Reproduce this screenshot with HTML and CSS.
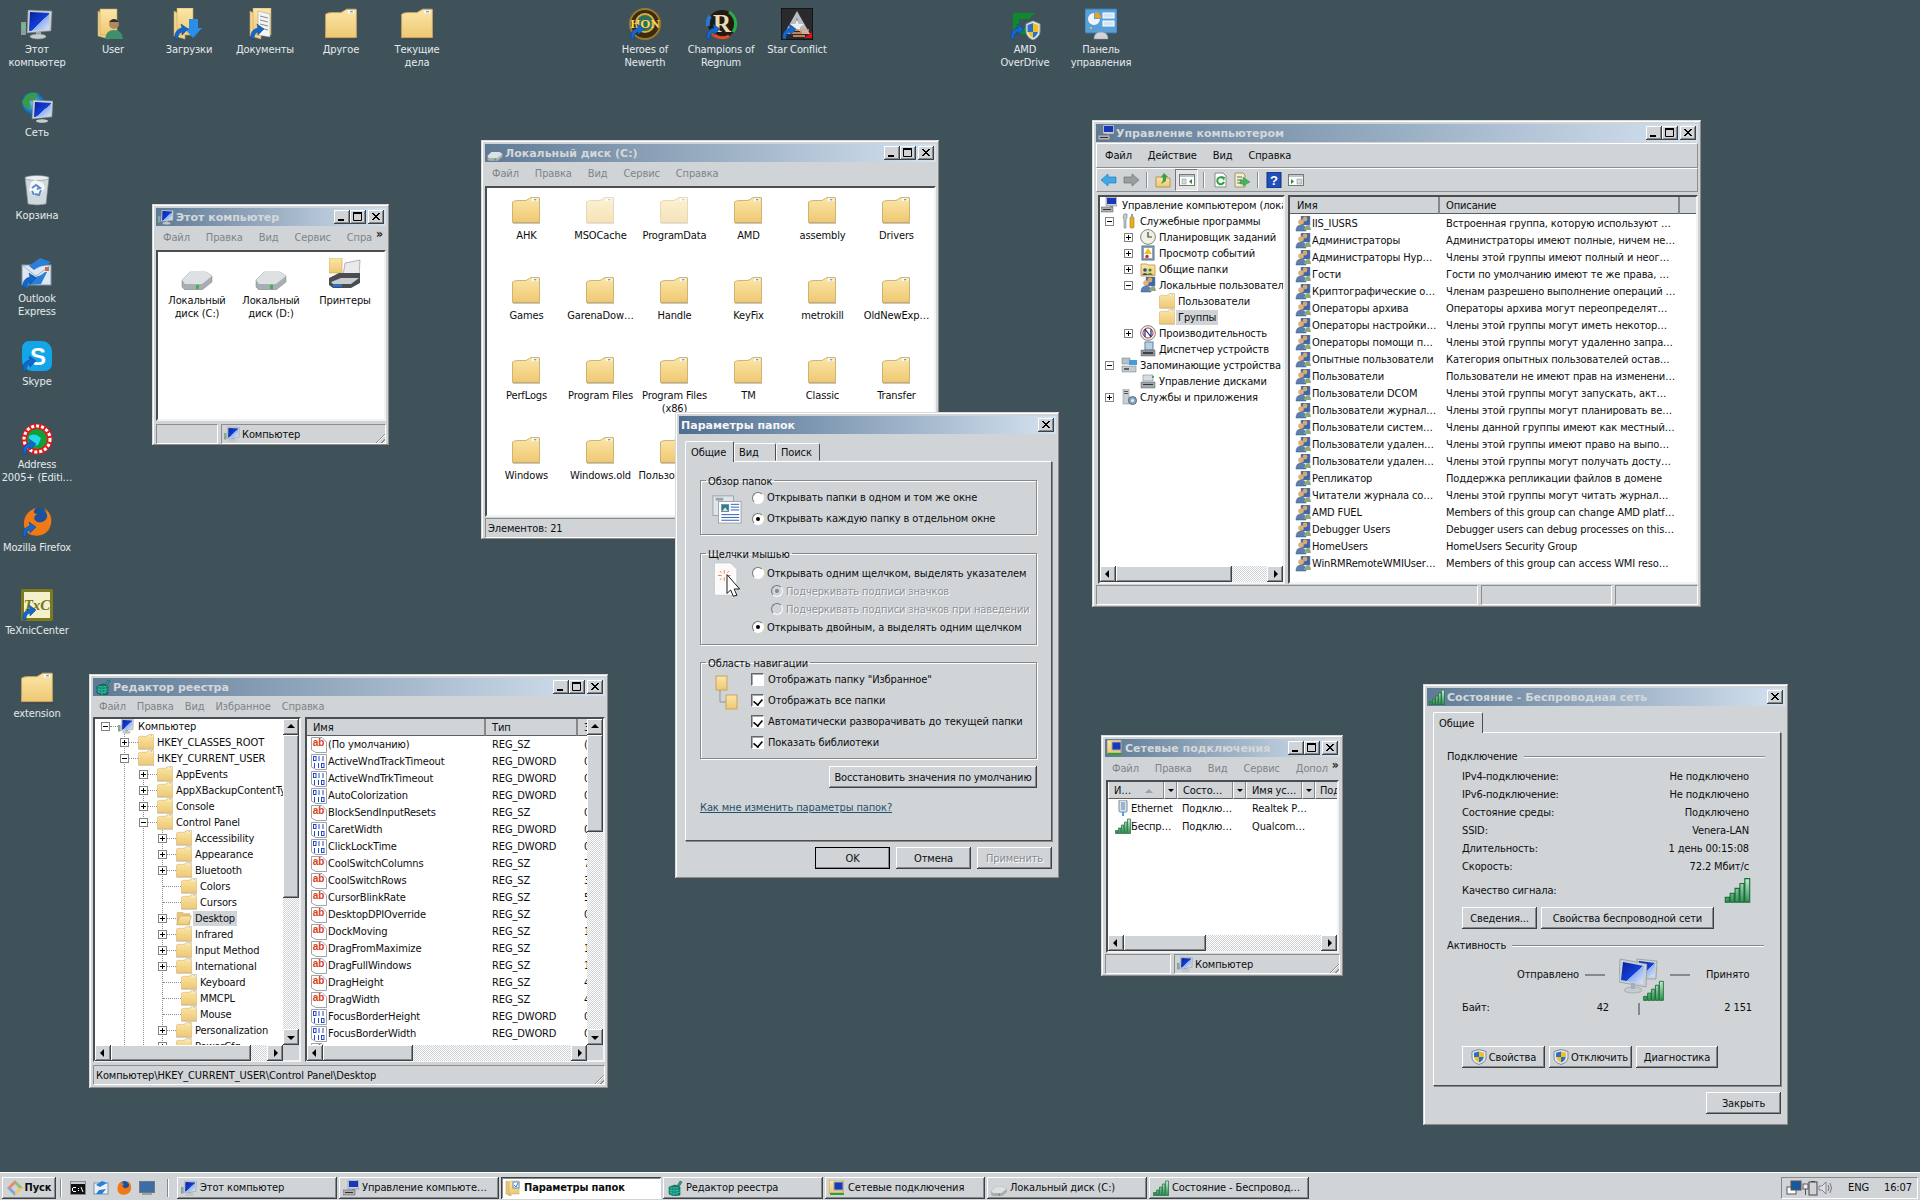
FILE: index.html
```html
<!DOCTYPE html>
<html lang="ru">
<head>
<meta charset="utf-8">
<title>Рабочий стол</title>
<link rel="stylesheet" href="styles.css">
</head>
<body>
<svg class="sprite" xmlns="http://www.w3.org/2000/svg">
<defs>
<linearGradient id="fg" x1="0" y1="0" x2="0" y2="1"><stop offset="0" stop-color="#fbe6a8"/><stop offset="1" stop-color="#eec873"/></linearGradient>
<linearGradient id="scr" x1="0" y1="0" x2="1" y2="1"><stop offset="0" stop-color="#06209c"/><stop offset=".55" stop-color="#1440d8"/><stop offset=".56" stop-color="#8fb0f0"/><stop offset="1" stop-color="#dfe9fb"/></linearGradient>
<linearGradient id="bar" x1="0" y1="0" x2="0" y2="1"><stop offset="0" stop-color="#c6ecd0"/><stop offset="1" stop-color="#2c9150"/></linearGradient>
<radialGradient id="glb"><stop offset="0" stop-color="#6cc6f0"/><stop offset="1" stop-color="#10609c"/></radialGradient>
</defs>
<symbol id="arrow" viewBox="0 0 32 32"><path d="M2 31 C1 25 4 21 9 20 L8 16 L15 21 L9 27 L9 24 C6 25 5 27 5 31 Z" fill="#1266cc" stroke="#0a3f8a" stroke-width=".5"/></symbol>
<symbol id="folder" viewBox="0 0 28 27"><rect x="1" y="25" width="27" height="2" fill="#000" opacity=".22"/><path d="M.5 5 Q2 3.5 6 3.5 H14 L19 .5 H27 Q27.5 .5 27.5 1 V25.5 H.5 Z" fill="url(#fg)" stroke="#c7a35d" stroke-width=".8"/><rect x="20" y="1.5" width="5.5" height="2.6" fill="#fff"/><rect x="22" y="2" width="2.4" height="1.4" fill="#6a9ed8"/></symbol>
<symbol id="fopen" viewBox="0 0 28 27"><path d="M2 4 H12 L14 6 H24 V25 H2 Z" fill="#e8c878" stroke="#c7a35d"/><path d="M7 10 H27 L22 25.5 H1 Z" fill="url(#fg)" stroke="#c7a35d"/></symbol>
<symbol id="comp" viewBox="0 0 32 32"><rect x="0" y="14" width="5" height="13" fill="#8f9ba0"/><rect x="1" y="16" width="3" height="6" fill="#6fbf7f"/><polygon points="7,2 31,3 30,23 6,25" fill="#c9d0d4" stroke="#6f7a80" stroke-width=".6"/><polygon points="9,4 28,5 28,21 8,23" fill="url(#scr)"/><rect x="15" y="24" width="5" height="3" fill="#a5acb0"/><ellipse cx="17" cy="28.5" rx="8" ry="2.5" fill="#c6cbce" stroke="#8a9094" stroke-width=".5"/></symbol>
<symbol id="net" viewBox="0 0 32 32"><circle cx="12" cy="12" r="11.5" fill="url(#glb)"/><path d="M5 4 Q12 0 17 3 L14 9 L8 10 L10 16 L4 17 L1 11 Z" fill="#3a9a48"/><path d="M13 18 L18 21 L16 24 L12 22 Z" fill="#3a9a48"/><polygon points="12,9 32,10 31,26 11,28" fill="#c9d0d4" stroke="#6f7a80" stroke-width=".5"/><polygon points="14,11 30,12 30,24 13,26" fill="url(#scr)"/><ellipse cx="21" cy="30" rx="6" ry="1.8" fill="#c6cbce"/></symbol>
<symbol id="bin" viewBox="0 0 32 32"><path d="M4 3 H28 L25 30 Q16 32 7 30 Z" fill="#cfd8dc" stroke="#7f8b92" stroke-width=".6"/><ellipse cx="16" cy="4" rx="12" ry="2.5" fill="#e9eef0" stroke="#7f8b92" stroke-width=".6"/><path d="M10 8 L14 6 L22 9 L24 14 L20 20 L12 22 L8 16 Z" fill="#f4f7f8"/><path d="M11 14 L15 11 L19 14 L16 15 M20 16 L18 21 L14 20 M11 17 L13 21" stroke="#5f88c8" stroke-width="2" fill="none"/></symbol>
<symbol id="oe" viewBox="0 0 32 32"><rect x="1" y="8" width="29" height="20" fill="#dfe8f2" stroke="#7d93ad"/><path d="M1 8 L15 19 L30 8" fill="none" stroke="#9fb3c8"/><rect x="24" y="10" width="4" height="4" fill="#c86b4b"/><path d="M19 1 L8 9 L13 13 Q18 9 26 8 L30 5 Z" fill="#2b7fd8"/><path d="M26 15 L20 27 L8 28 L5 31 Q3 24 12 18 L14 20 Q20 19 24 15 Z" fill="#2b7fd8"/></symbol>
<symbol id="skype" viewBox="0 0 32 32"><rect x="1" y="1" width="30" height="30" rx="10" fill="#12a5e8"/><circle cx="8" cy="8" r="7" fill="#12a5e8"/><circle cx="24" cy="24" r="7" fill="#12a5e8"/></symbol>
<symbol id="addr" viewBox="0 0 32 32"><circle cx="16" cy="16" r="15.5" fill="#e01818"/><circle cx="16" cy="16" r="10" fill="#0fa03c"/><path d="M8 13 Q14 9 20 15 L17 22 Q10 24 8 18 Z" fill="#25d8e8"/><circle cx="16" cy="16" r="13" fill="none" stroke="#fff" stroke-width="3" stroke-dasharray="3 2"/></symbol>
<symbol id="ff" viewBox="0 0 32 32"><circle cx="17" cy="15" r="13" fill="#1c4f9c"/><path d="M3 20 C2 10 8 4 15 2 C11 6 13 8 17 8 C13 9 12 13 15 15 C18 18 25 16 26 11 C27 7 24 3 23 2 C30 6 32 14 29 21 C26 29 17 31 11 29 C6 28 4 24 3 20 Z" fill="#ef7a15"/><path d="M22 4 C28 8 30 14 28 20 C30 12 27 6 22 4Z" fill="#f6c534"/></symbol>
<symbol id="txc" viewBox="0 0 32 32"><rect x="0" y="0" width="32" height="32" rx="2" fill="#7c7a1e"/><rect x="3" y="3" width="26" height="26" fill="#f3f0cc"/></symbol>
<symbol id="user" viewBox="0 0 32 32"><path d="M1 3 L12 9 V31 L1 28 Z" fill="#f1d792" stroke="#c7a35d" stroke-width=".6"/><path d="M3 1 H20 V27 H3 Z" fill="url(#fg)" stroke="#c7a35d" stroke-width=".6"/><circle cx="17" cy="16" r="5" fill="#b08860"/><path d="M12 14 Q17 8 22 14 Z" fill="#2f2f2f"/><path d="M8 31 Q9 22 17 22 Q25 22 26 31 Z" fill="#3f8f6a"/></symbol>
<symbol id="dl" viewBox="0 0 32 32"><path d="M1 3 L12 9 V31 L1 28 Z" fill="#f1d792" stroke="#c7a35d" stroke-width=".6"/><path d="M4 0 H20 V27 H4 Z" fill="url(#fg)" stroke="#c7a35d" stroke-width=".6"/><path d="M16 11 H25 V20 H29 L20 30 L11 20 H16 Z" fill="#2a8ee6"/><use href="#arrow" width="32" height="32"/></symbol>
<symbol id="docs" viewBox="0 0 32 32"><path d="M1 3 L12 9 V31 L1 28 Z" fill="#f1d792" stroke="#c7a35d" stroke-width=".6"/><path d="M4 0 H22 V27 H4 Z" fill="url(#fg)" stroke="#c7a35d" stroke-width=".6"/><path d="M9 3 L21 6 V29 L9 27 Z" fill="#f4f4f4" stroke="#999" stroke-width=".5"/><path d="M11 8 L19 10 M11 12 L19 14 M11 16 L19 18 M11 20 L19 22" stroke="#888"/><use href="#arrow" width="32" height="32"/></symbol>
<symbol id="hon" viewBox="0 0 32 32"><circle cx="16" cy="16" r="15" fill="#3d2a10" stroke="#9c7a2c" stroke-width="2"/><circle cx="16" cy="15" r="9" fill="#2f6e58" stroke="#d8b040" stroke-width="2"/></symbol>
<symbol id="reg" viewBox="0 0 32 32"><circle cx="17" cy="16" r="14" fill="#241a12"/><path d="M24 4 A14 14 0 0 1 28 24" stroke="#28b048" stroke-width="3" fill="none"/><path d="M6 24 A14 14 0 0 0 24 28" stroke="#e84a20" stroke-width="3" fill="none"/><path d="M5 8 A14 14 0 0 0 3 18" stroke="#2878d8" stroke-width="4" fill="none"/></symbol>
<symbol id="sc" viewBox="0 0 32 32"><rect x="0" y="0" width="32" height="32" fill="#2a2a2c" stroke="#000"/><path d="M16 3 L29 26 H3 Z" fill="#b8bcc4"/><path d="M16 10 L21 26 H11 Z" fill="#2a2a2c"/><path d="M16 11 L18 16 L23 16 L19 19 L20 24 L16 21 L12 24 L13 19 L9 16 L14 16 Z" fill="#eee"/><path d="M8 22 H28 M10 25 H26 M12 28 H24" stroke="#e8a070" stroke-width="1.5"/><path d="M23 30 L31 24 V30 Z" fill="#e01010"/></symbol>
<symbol id="amd" viewBox="0 0 32 32"><path d="M4 5 H26 L20 11 H10 V18 L4 23 Z" fill="#0e8a2c"/><path d="M22 12 V26 H10 L22 12" fill="#0e8a2c"/><path d="M24 13 L31 16 V23 Q31 29 24 32 Q17 29 17 23 V16 Z" fill="#e8edf0" stroke="#8a9aa8"/><path d="M24 15 V24 H18.5 V17 Z" fill="#2a70c8"/><path d="M24 15 L29.5 17 V24 H24 Z" fill="#f0c020"/><path d="M19 24 H24 V30 Q20 28 19 24Z" fill="#f0c020"/><path d="M24 24 H29 Q28 28 24 30Z" fill="#2a70c8"/></symbol>
<symbol id="cp" viewBox="0 0 32 32"><rect x="0" y="1" width="32" height="24" rx="1" fill="#5aa0d8" stroke="#3a7ab0"/><path d="M9 5 A6 6 0 1 0 15 11 H9 Z" fill="#fff" opacity=".9"/><path d="M10 4 A6 6 0 0 1 16 10 H10 Z" fill="#f0a020"/><rect x="18" y="5" width="11" height="5" fill="#cfe6f8" stroke="#fff"/><rect x="18" y="13" width="11" height="5" fill="#cfe6f8" stroke="#fff"/><circle cx="6" cy="20" r="1" fill="#f8d040"/><path d="M9 31 Q9 24 16 24 Q23 24 23 31 Z" fill="#d0d4d8" stroke="#999" stroke-width=".5"/></symbol>
<symbol id="drive" viewBox="0 0 32 32"><path d="M1 22 L9 14 H25 L31 18 V24 L21 32 H4 L1 29 Z" fill="#a8aeb2" stroke="#7b8186" stroke-width=".5"/><path d="M1 22 L9 14 H25 L31 18 L21 26 H4 Z" fill="#dde1e3"/><rect x="15" y="27" width="3" height="4" fill="#39b54a"/></symbol>
<symbol id="printer" viewBox="0 0 32 32"><rect x="0" y="0" width="13" height="15" fill="url(#fg)" stroke="#c7a35d" stroke-width=".6"/><path d="M16 5 L31 2 L30 18 L14 18 Z" fill="#e8eaec" stroke="#888" stroke-width=".6"/><path d="M0 20 L10 15 H31 V25 L22 30 H4 L0 27 Z" fill="#4a4d50"/><path d="M2 24 L12 20 H30 L22 26 H4 Z" fill="#c8ccd0"/><rect x="4" y="26" width="9" height="3" fill="#2a70c8"/></symbol>
<symbol id="c-min" viewBox="0 0 16 14"><rect x="4" y="9" width="6" height="2" fill="#000"/></symbol>
<symbol id="c-max" viewBox="0 0 16 14"><path d="M3.5 2.5 H11.5 V10.5 H3.5 Z M3 3 H12" fill="none" stroke="#000"/><rect x="3" y="2" width="9" height="2" fill="#000"/></symbol>
<symbol id="c-x" viewBox="0 0 16 14"><path d="M4 3 L11 10 M11 3 L4 10 M5 3 L12 10 M12 3 L5 10" stroke="#000" fill="none"/></symbol>
<symbol id="grp" viewBox="0 0 16 16"><rect x="6" y="0" width="9" height="9" fill="#3f66a8" stroke="#6a86b8" stroke-width=".5"/><circle cx="10" cy="3" r="2.4" fill="#d8a868"/><circle cx="6" cy="6" r="2.8" fill="#e0b078"/><path d="M1 15 Q1 9 6 9 Q11 9 11 15 Z" fill="#5c7fae" stroke="#39557c" stroke-width=".5"/><path d="M9 14 Q10 9 14 9 Q16 11 16 14 Z" fill="#8ca87a"/></symbol>
<symbol id="tools" viewBox="0 0 16 16"><path d="M3 1 L6 1 L6 5 L5 6 V15 H3 V6 L2 5 Z" fill="#c8ccd0" stroke="#6f777c" stroke-width=".6"/><rect x="9" y="4" width="4" height="11" rx="1" fill="#e8b020" stroke="#a07a10" stroke-width=".6"/><rect x="10" y="1" width="2" height="4" fill="#9aa0a4"/></symbol>
<symbol id="clock" viewBox="0 0 16 16"><circle cx="8" cy="8" r="7.4" fill="#f2f0e2" stroke="#7f858a"/><path d="M8 3 V8 H12" stroke="#344" stroke-width="1.2" fill="none"/></symbol>
<symbol id="evt" viewBox="0 0 16 16"><rect x="2" y="1" width="12" height="14" fill="#8da6c4" stroke="#54708f"/><rect x="4" y="3" width="8" height="10" fill="#fff"/><path d="M8 3 L12 9 H4 Z" fill="#f0c020"/><circle cx="7" cy="11.5" r="1.8" fill="#d83020"/></symbol>
<symbol id="share" viewBox="0 0 16 16"><path d="M1 3 H7 L8 4 H15 V15 H1 Z" fill="url(#fg)" stroke="#c7a35d"/><circle cx="5" cy="9" r="1.8" fill="#2a4a90"/><path d="M2 14 Q5 10 8 14 Z" fill="#2a4a90"/><circle cx="10" cy="9" r="1.6" fill="#3a8040"/><path d="M7 14 Q10 10 13 14 Z" fill="#3a8040"/></symbol>
<symbol id="perf" viewBox="0 0 16 16"><circle cx="8" cy="8" r="7.4" fill="#eef0f2" stroke="#7f858a"/><circle cx="8" cy="8" r="5" fill="#fff" stroke="#c83030"/><path d="M5 4 L11 12 M5 12 V4 M11 4 V12" stroke="#1a2a70" stroke-width="1.2" fill="none"/></symbol>
<symbol id="dev" viewBox="0 0 16 16"><rect x="5" y="1" width="8" height="8" fill="#b8d0e8" stroke="#6a7f95"/><path d="M1 9 H15 V15 H1 Z" fill="#8f969b" stroke="#5a6066" stroke-width=".5"/><rect x="3" y="11" width="10" height="2" fill="#3a4046"/></symbol>
<symbol id="stor" viewBox="0 0 16 16"><path d="M1 1 H9 V7 H1 Z" fill="#b8c0c6" stroke="#6f777c" stroke-width=".5"/><path d="M1 9 H15 V15 H1 Z" fill="#c8ccd0" stroke="#6f777c" stroke-width=".5"/><rect x="8" y="3" width="8" height="5" fill="#3f9fd8"/><rect x="3" y="11" width="5" height="2" fill="#5a6066"/></symbol>
<symbol id="dmgmt" viewBox="0 0 16 16"><path d="M1 9 H15 V15 H1 Z" fill="#a0a6aa" stroke="#5a6066" stroke-width=".5"/><rect x="3" y="2" width="10" height="6" fill="#d8dcdf" stroke="#6f777c" stroke-width=".5"/><rect x="3" y="11" width="10" height="1" fill="#333"/><rect x="12" y="3" width="2" height="2" fill="#39b54a"/></symbol>
<symbol id="svc" viewBox="0 0 16 16"><rect x="2" y="0" width="6" height="15" fill="#c8d0d6" stroke="#7f878c" stroke-width=".5"/><rect x="3" y="2" width="4" height="1" fill="#555"/><rect x="3" y="4" width="4" height="1" fill="#555"/><circle cx="11.5" cy="11.5" r="4" fill="#8aa8c0" stroke="#4a6680"/><circle cx="11.5" cy="11.5" r="1.5" fill="#eee"/></symbol>
<symbol id="mgmt" viewBox="0 0 16 16"><rect x="5" y="0" width="11" height="9" fill="#c8d0d6" stroke="#6f777c" stroke-width=".5"/><rect x="6" y="1" width="9" height="6" fill="#1a36b8"/><rect x="9" y="9" width="3" height="2" fill="#999"/><path d="M0 10 H12 V15 H0 Z" fill="#aab0b4" stroke="#555" stroke-width=".5"/><rect x="2" y="12" width="8" height="1" fill="#333"/></symbol>
<symbol id="t-back" viewBox="0 0 16 16"><path d="M0 8 L7 2 V5 H15 V11 H7 V14 Z" fill="#3fa8e8" stroke="#1a70b0" stroke-width=".6"/></symbol>
<symbol id="t-fwd" viewBox="0 0 16 16"><path d="M16 8 L9 2 V5 H1 V11 H9 V14 Z" fill="#9a9ea0" stroke="#666" stroke-width=".6"/></symbol>
<symbol id="t-up" viewBox="0 0 16 16"><path d="M1 5 H6 L7 6 H15 V15 H1 Z" fill="url(#fg)" stroke="#b8964c"/><path d="M9 1 L13 5 H11 V9 L6 12 L8 8 V5 H6 Z" fill="#3aa048"/></symbol>
<symbol id="t-pane" viewBox="0 0 16 16"><rect x=".5" y="2.5" width="15" height="11" fill="#fff" stroke="#777"/><rect x="1" y="3" width="14" height="2" fill="#b8c4d0"/><rect x="3" y="7" width="4" height="5" fill="#cdd" stroke="#888" stroke-width=".5"/><path d="M13 7 L10 9.5 L13 12 Z" fill="#2c8a40"/></symbol>
<symbol id="t-ref" viewBox="0 0 16 16"><path d="M3 1 H11 L14 4 V15 H3 Z" fill="#fff" stroke="#888"/><path d="M11 6 A3.5 3.5 0 1 0 12 10" stroke="#2ca040" stroke-width="2" fill="none"/><path d="M9 4 L13 5 L12 9 Z" fill="#2ca040"/></symbol>
<symbol id="t-exp" viewBox="0 0 16 16"><path d="M1 1 H9 L11 3 V15 H1 Z" fill="#f6efcf" stroke="#a09468"/><path d="M3 5 H8 M3 8 H8 M3 11 H8" stroke="#666"/><path d="M9 5 L16 10 L9 14 V12 H6 V8 H9 Z" fill="#46b25a" stroke="#2c8a40" stroke-width=".4"/></symbol>
<symbol id="t-help" viewBox="0 0 16 16"><rect x="1" y="0" width="14" height="16" fill="#1f50b8" stroke="#0f3080"/></symbol>
<symbol id="t-pane2" viewBox="0 0 16 16"><rect x=".5" y="2.5" width="15" height="11" fill="#fff" stroke="#777"/><rect x="1" y="3" width="14" height="2" fill="#b8c4d0"/><path d="M3 7 L6 9.5 L3 12 Z" fill="#2c8a40"/><rect x="9" y="7" width="5" height="5" fill="#cdd" stroke="#888" stroke-width=".5"/></symbol>
<symbol id="regedit" viewBox="0 0 16 16"><path d="M2 7 L8 5 L13 7 V15 L7 16 L2 14 Z" fill="#15806c" stroke="#063028" stroke-width=".5"/><path d="M7 8 V16 M2 7 L7 8 L13 7 M2 10 L7 11 L13 10 M2 12 L7 14 L13 12 M4 7.5 V14.5 M10 7.5 V15" stroke="#39e0c8" stroke-width=".5" fill="none"/><path d="M10 6 L13 1 L15 2 L12 7 Z" fill="#2aa088" stroke="#063028" stroke-width=".4"/></symbol>
<symbol id="val-page" viewBox="0 0 16 16"><path d="M.5 .5 H11 L15.5 5 V15.5 H5 L.5 13 Z" fill="#fff" stroke="#9ea4a8"/></symbol>
<symbol id="val-bin" viewBox="0 0 16 16"><path d="M.5 .5 H15.5 V15.5 H5 L.5 13 Z" fill="#fff" stroke="#9ea4a8"/><g fill="none" stroke="#2048c8"><rect x="2.5" y="2.5" width="2.5" height="4"/><path d="M8 2 V7 M12 2 V7"/><path d="M3.5 9 V14 M7.5 9 V14"/><rect x="10.5" y="9.5" width="2.5" height="4"/></g></symbol>
<symbol id="wifi" viewBox="0 0 16 16"><path d="M.5 12.5 H3 V15.5 H.5 Z M3.5 10 H6 V15.5 H3.5 Z M6.5 7 H9 V15.5 H6.5 Z M9.5 4 H12 V15.5 H9.5 Z M12.5 1 H15.5 V15.5 H12.5 Z" fill="url(#bar)" stroke="#1d6e3c" stroke-width=".7"/></symbol>
<symbol id="eth" viewBox="0 0 16 16"><rect x="4" y="0" width="8" height="12" rx="1" fill="#dbe3ea" stroke="#7a8c9e"/><rect x="6" y="2" width="4" height="8" fill="#9bb4ce"/><rect x="7" y="12" width="2" height="4" fill="#4aa0e8"/></symbol>
<symbol id="shield" viewBox="0 0 16 16"><path d="M8 .5 L15 2.5 V9 Q15 13 8 15.5 Q1 13 1 9 V2.5 Z" fill="#e6eaee" stroke="#7c8a98"/><path d="M8 2.5 V8 H3 V3.8 Z" fill="#2a70c8"/><path d="M8 2.5 L13 3.8 V8 H8 Z" fill="#f0c020"/><path d="M3.2 8 H8 V13.5 Q4 12 3.2 8Z" fill="#f0c020"/><path d="M8 8 H12.8 Q12 12 8 13.5Z" fill="#2a70c8"/></symbol>
<symbol id="fo-view" viewBox="0 0 32 32"><rect x="1" y="2" width="22" height="21" fill="#dfe5ea" stroke="#9aa2a8"/><rect x="4" y="4" width="8" height="3" fill="#96a4b2"/><rect x="7" y="8" width="24" height="23" fill="#fff" stroke="#9aa2a8"/><rect x="10" y="11" width="8" height="8" fill="#1f7fa0" stroke="#888" stroke-width=".5"/><path d="M11 18 L14 14 L17 18 Z" fill="#e6e1b0"/><path d="M20 11 H29 M20 14 H29 M20 17 H29 M10 22 H29 M10 25 H29 M10 28 H29" stroke="#2855b8"/></symbol>
<symbol id="fo-click" viewBox="0 0 32 40"><path d="M2 1 H20 L27 8 V37 H2 Z" fill="#fbfbfb" stroke="#c4c8cc"/><path d="M13 9 V13 M13 17 V21 M6 15 H10 M16 15 H20 M8 10 L10 12 M18 10 L16 12 M8 20 L10 18" stroke="#ee7a30"/><path d="M16 14 L30 30 H24 L27 37 L23 38 L20 31 L16 35 Z" fill="#fff" stroke="#000"/></symbol>
<symbol id="fo-tree" viewBox="0 0 26 40"><rect x="2" y="2" width="11" height="14" fill="url(#fg)" stroke="#c7a35d"/><rect x="12" y="21" width="11" height="14" fill="url(#fg)" stroke="#c7a35d"/><path d="M6 16 V28 H12" stroke="#8e9498" fill="none"/></symbol>
<symbol id="fo-task" viewBox="0 0 16 16"><path d="M1 1 L6 3 V16 L1 14 Z" fill="#e8c878" stroke="#b8964c" stroke-width=".5"/><rect x="4" y="1" width="10" height="13" fill="url(#fg)" stroke="#c7a35d" stroke-width=".5"/><rect x="8" y="2" width="6" height="6" fill="#fff" stroke="#5a8ac0"/><path d="M9 5 L11 7 L13 3" stroke="#2a70c8" fill="none"/></symbol>
<symbol id="netc" viewBox="0 0 16 16"><rect x="0" y="0" width="14" height="13" fill="url(#fg)" stroke="#c7a35d"/><rect x="5" y="2" width="9" height="8" fill="#1a3ab8" stroke="#9ab"/><rect x="1" y="13" width="14" height="2" fill="#2ca040"/></symbol>
<symbol id="netcomp" viewBox="0 0 46 44"><polygon points="18,2 38,4 37,22 18,22" fill="#c9d0d4" stroke="#6f7a80" stroke-width=".5"/><polygon points="20,4 36,6 35,20 20,20" fill="url(#scr)"/><polygon points="1,2 28,7 27,30 0,25" fill="#c9d0d4" stroke="#6f7a80" stroke-width=".5"/><polygon points="4,5 25,9 24,27 2,23" fill="url(#scr)"/><ellipse cx="14" cy="33" rx="9" ry="3" fill="#c6cbce" stroke="#8a9094" stroke-width=".5"/><rect x="12" y="26" width="4" height="6" fill="#aab"/><use href="#wifi" x="24" y="23" width="21" height="21"/></symbol>
<symbol id="start" viewBox="0 0 16 16"><path d="M8 0 L16 8 L12 8 L8 4 Z" fill="#8fbf7a"/><path d="M8 0 L0 8 L4 8 L8 4 Z" fill="#e88a70"/><path d="M0 8 L8 16 L8 12 L4 8 Z" fill="#7fa8d8"/><path d="M16 8 L8 16 L8 12 L12 8 Z" fill="#f0c860"/></symbol>
<symbol id="cmd" viewBox="0 0 16 16"><rect x=".5" y="1.5" width="15" height="13" fill="#111" stroke="#888"/><rect x="1" y="2" width="14" height="2" fill="#c8ccd0"/><path d="M3 7 H6 V8 H3 Z M3 11 H6 V12 H3 Z M2 8 H3 V11 H2 Z M8 8 H9 V9 H8 Z M8 10 H9 V11 H8 Z" fill="#fff"/><path d="M11 7 L13 12" stroke="#fff"/></symbol>
<symbol id="oe16" viewBox="0 0 16 16"><rect x="1" y="3" width="14" height="11" fill="#eef2f6" stroke="#7d93ad"/><path d="M9 1 L3 5 L7 7 L14 3 Z M13 9 L9 14 L3 14 L6 10 Z" fill="#2b7fd8"/></symbol>
<symbol id="showd" viewBox="0 0 16 16"><rect x=".5" y="1.5" width="15" height="11" fill="#3a6ea5" stroke="#6f7a80"/><rect x="3" y="13" width="10" height="2" fill="#9aa0a4"/></symbol>
<symbol id="tr-net" viewBox="0 0 16 16"><rect x="1" y="7" width="9" height="7" fill="#fff" stroke="#555"/><rect x="5" y="1" width="10" height="9" fill="#17599f" stroke="#555"/></symbol>
<symbol id="tr-pow" viewBox="0 0 16 16"><rect x="7" y="2" width="8" height="13" fill="none" stroke="#444"/><rect x="9" y="1" width="4" height="1" fill="#444"/><rect x="1" y="4" width="5" height="5" fill="#eee" stroke="#555"/><rect x="3" y="9" width="1" height="6" fill="#555"/></symbol>
<symbol id="tr-vol" viewBox="0 0 16 16"><path d="M1 6 H4 L8 2 V14 L4 10 H1 Z" fill="#dde" stroke="#666" stroke-width=".7"/><path d="M10 5 Q12 8 10 11 M12 3 Q15 8 12 13" stroke="#777" fill="none"/></symbol>
</svg>

<main class="desktop">
  <div class="dicons">
    <a class="dicon"><svg class="i32"><use href="#comp"/></svg><span>Этот компьютер</span></a>
    <a class="dicon"><svg class="i32"><use href="#user"/></svg><span>User</span></a>
    <a class="dicon"><svg class="i32"><use href="#dl"/></svg><span>Загрузки</span></a>
    <a class="dicon"><svg class="i32"><use href="#docs"/></svg><span>Документы</span></a>
    <a class="dicon"><svg class="i32"><use href="#folder"/></svg><span>Другое</span></a>
    <a class="dicon"><svg class="i32"><use href="#folder"/></svg><span>Текущие дела</span></a>
    <a class="dicon c8"><svg class="i32" viewBox="0 0 32 32"><use href="#hon" width="32" height="32"/><text class="lg lg-hon" x="16" y="20">HON</text><use href="#arrow" width="32" height="32"/></svg><span>Heroes of Newerth</span></a>
    <a class="dicon c9"><svg class="i32" viewBox="0 0 32 32"><use href="#reg" width="32" height="32"/><text class="lg lg-reg" x="17" y="24">R</text><use href="#arrow" width="32" height="32"/></svg><span>Champions of Regnum</span></a>
    <a class="dicon c10"><svg class="i32"><use href="#sc"/><use href="#arrow"/></svg><span>Star Conflict</span></a>
    <a class="dicon c14"><svg class="i32"><use href="#amd"/><use href="#arrow"/></svg><span>AMD OverDrive</span></a>
    <a class="dicon c15"><svg class="i32"><use href="#cp"/></svg><span>Панель управления</span></a>
    <a class="dicon c1"><svg class="i32"><use href="#net"/></svg><span>Сеть</span></a>
    <a class="dicon c1"><svg class="i32"><use href="#bin"/></svg><span>Корзина</span></a>
    <a class="dicon c1"><svg class="i32"><use href="#oe"/><use href="#arrow"/></svg><span>Outlook Express</span></a>
    <a class="dicon c1"><svg class="i32" viewBox="0 0 32 32"><use href="#skype" width="32" height="32"/><text class="lg lg-sk" x="17" y="25">S</text><use href="#arrow" width="32" height="32"/></svg><span>Skype</span></a>
    <a class="dicon c1"><svg class="i32"><use href="#addr"/><use href="#arrow"/></svg><span class="lbl-wide">Address<br>2005+ (Editi…</span></a>
    <a class="dicon c1"><svg class="i32"><use href="#ff"/><use href="#arrow"/></svg><span>Mozilla Firefox</span></a>
    <a class="dicon c1"><svg class="i32" viewBox="0 0 32 32"><use href="#txc" width="32" height="32"/><text class="lg lg-txc" x="16" y="21">TxC</text><use href="#arrow" width="32" height="32"/></svg><span>TeXnicCenter</span></a>
    <a class="dicon c1"><svg class="i32"><use href="#folder"/></svg><span>extension</span></a>
  </div>

  <!-- Этот компьютер -->
  <section class="win w-comp">
    <header class="title"><svg class="i16"><use href="#comp"/></svg><span class="ttext">Этот компьютер</span><span class="caps"><span class="cap"><svg><use href="#c-min"/></svg></span><span class="cap"><svg><use href="#c-max"/></svg></span><span class="cap capx"><svg><use href="#c-x"/></svg></span></span></header>
    <nav class="menu"><span>Файл</span><span>Правка</span><span>Вид</span><span>Сервис</span><span>Спра</span><b class="more">»</b></nav>
    <div class="sunken iconview comp-view">
      <div class="fitem"><svg class="i32"><use href="#drive"/></svg><span>Локальный диск (C:)</span></div>
      <div class="fitem"><svg class="i32"><use href="#drive"/></svg><span>Локальный диск (D:)</span></div>
      <div class="fitem"><svg class="i32"><use href="#printer"/></svg><span>Принтеры</span></div>
    </div>
    <footer class="status"><span class="scell s-empty"></span><span class="scell s-grow"><svg class="i16"><use href="#comp"/></svg>Компьютер<i class="grip"></i></span></footer>
  </section>

  <!-- Локальный диск -->
  <section class="win w-disk">
    <header class="title"><svg class="i16"><use href="#drive"/></svg><span class="ttext">Локальный диск (C:)</span><span class="caps"><span class="cap"><svg><use href="#c-min"/></svg></span><span class="cap"><svg><use href="#c-max"/></svg></span><span class="cap capx"><svg><use href="#c-x"/></svg></span></span></header>
    <nav class="menu"><span>Файл</span><span>Правка</span><span>Вид</span><span>Сервис</span><span>Справка</span></nav>
    <div class="sunken iconview folder-view">
      <div class="fitem"><svg class="ifold"><use href="#folder"/></svg><span>AHK</span></div>
      <div class="fitem ghost"><svg class="ifold"><use href="#folder"/></svg><span>MSOCache</span></div>
      <div class="fitem ghost"><svg class="ifold"><use href="#folder"/></svg><span>ProgramData</span></div>
      <div class="fitem"><svg class="ifold"><use href="#folder"/></svg><span>AMD</span></div>
      <div class="fitem"><svg class="ifold"><use href="#folder"/></svg><span>assembly</span></div>
      <div class="fitem"><svg class="ifold"><use href="#folder"/></svg><span>Drivers</span></div>
      <div class="fitem"><svg class="ifold"><use href="#folder"/></svg><span>Games</span></div>
      <div class="fitem"><svg class="ifold"><use href="#folder"/></svg><span>GarenaDow…</span></div>
      <div class="fitem"><svg class="ifold"><use href="#folder"/></svg><span>Handle</span></div>
      <div class="fitem"><svg class="ifold"><use href="#folder"/></svg><span>KeyFix</span></div>
      <div class="fitem"><svg class="ifold"><use href="#folder"/></svg><span>metrokill</span></div>
      <div class="fitem"><svg class="ifold"><use href="#folder"/></svg><span>OldNewExp…</span></div>
      <div class="fitem"><svg class="ifold"><use href="#folder"/></svg><span>PerfLogs</span></div>
      <div class="fitem"><svg class="ifold"><use href="#folder"/></svg><span>Program Files</span></div>
      <div class="fitem"><svg class="ifold"><use href="#folder"/></svg><span>Program Files (x86)</span></div>
      <div class="fitem"><svg class="ifold"><use href="#folder"/></svg><span>TM</span></div>
      <div class="fitem"><svg class="ifold"><use href="#folder"/></svg><span>Classic</span></div>
      <div class="fitem"><svg class="ifold"><use href="#folder"/></svg><span>Transfer</span></div>
      <div class="fitem"><svg class="ifold"><use href="#folder"/></svg><span>Windows</span></div>
      <div class="fitem"><svg class="ifold"><use href="#folder"/></svg><span>Windows.old</span></div>
      <div class="fitem"><svg class="ifold"><use href="#folder"/></svg><span>Пользователи</span></div>
    </div>
    <footer class="status"><span class="scell s-grow">Элементов: 21</span></footer>
  </section>

  <!-- Управление компьютером -->
  <section class="win w-mgmt">
    <header class="title"><svg class="i16"><use href="#mgmt"/></svg><span class="ttext">Управление компьютером</span><span class="caps"><span class="cap"><svg><use href="#c-min"/></svg></span><span class="cap"><svg><use href="#c-max"/></svg></span><span class="cap capx"><svg><use href="#c-x"/></svg></span></span></header>
    <nav class="menu menu-dark band"><span>Файл</span><span>Действие</span><span>Вид</span><span>Справка</span></nav>
    <div class="toolbar band">
      <svg class="i16"><use href="#t-back"/></svg><svg class="i16"><use href="#t-fwd"/></svg><i class="tsep"></i>
      <svg class="i16"><use href="#t-up"/></svg><span class="tpressed"><svg class="i16"><use href="#t-pane"/></svg></span><i class="tsep"></i>
      <svg class="i16"><use href="#t-ref"/></svg><svg class="i16"><use href="#t-exp"/></svg><i class="tsep"></i>
      <svg class="i16" viewBox="0 0 16 16"><use href="#t-help" width="16" height="16"/><text class="lg lg-help" x="8" y="13">?</text></svg><svg class="i16"><use href="#t-pane2"/></svg>
    </div>
    <div class="split mgmt-split">
      <div class="sunken treepane mgmt-tree">
        <div class="tree">
          <div class="tn root"><svg class="i16"><use href="#mgmt"/></svg><span>Управление компьютером (лока</span></div>
          <div class="tn l1"><i class="exp minus"></i><svg class="i16"><use href="#tools"/></svg><span>Служебные программы</span></div>
          <div class="tn l2"><i class="exp plus"></i><svg class="i16"><use href="#clock"/></svg><span>Планировщик заданий</span></div>
          <div class="tn l2"><i class="exp plus"></i><svg class="i16"><use href="#evt"/></svg><span>Просмотр событий</span></div>
          <div class="tn l2"><i class="exp plus"></i><svg class="i16"><use href="#share"/></svg><span>Общие папки</span></div>
          <div class="tn l2"><i class="exp minus"></i><svg class="i16"><use href="#grp"/></svg><span>Локальные пользовател</span></div>
          <div class="tn l3"><i class="exp none"></i><svg class="i16"><use href="#folder"/></svg><span>Пользователи</span></div>
          <div class="tn l3"><i class="exp none"></i><svg class="i16"><use href="#folder"/></svg><span class="sel">Группы</span></div>
          <div class="tn l2"><i class="exp plus"></i><svg class="i16"><use href="#perf"/></svg><span>Производительность</span></div>
          <div class="tn l2"><i class="exp none"></i><svg class="i16"><use href="#dev"/></svg><span>Диспетчер устройств</span></div>
          <div class="tn l1"><i class="exp minus"></i><svg class="i16"><use href="#stor"/></svg><span>Запоминающие устройства</span></div>
          <div class="tn l2"><i class="exp none"></i><svg class="i16"><use href="#dmgmt"/></svg><span>Управление дисками</span></div>
          <div class="tn l1"><i class="exp plus"></i><svg class="i16"><use href="#svc"/></svg><span>Службы и приложения</span></div>
        </div>
        <div class="hscroll mgmt-hs"><span class="sbtn left"></span><span class="thumb"></span><span class="track"></span><span class="sbtn right"></span></div>
      </div>
      <div class="sunken mgmt-list">
        <div class="lhead"><span class="hcell h-name">Имя</span><span class="hcell h-desc">Описание</span><span class="hcell h-rest"></span></div>
        <div class="lbody">
          <div class="lrow"><svg class="i16"><use href="#grp"/></svg><span class="lname">IIS_IUSRS</span><span>Встроенная группа, которую используют …</span></div>
          <div class="lrow"><svg class="i16"><use href="#grp"/></svg><span class="lname">Администраторы</span><span>Администраторы имеют полные, ничем не…</span></div>
          <div class="lrow"><svg class="i16"><use href="#grp"/></svg><span class="lname">Администраторы Нур…</span><span>Члены этой группы имеют полный и неог…</span></div>
          <div class="lrow"><svg class="i16"><use href="#grp"/></svg><span class="lname">Гости</span><span>Гости по умолчанию имеют те же права, …</span></div>
          <div class="lrow"><svg class="i16"><use href="#grp"/></svg><span class="lname">Криптографические о…</span><span>Членам разрешено выполнение операций …</span></div>
          <div class="lrow"><svg class="i16"><use href="#grp"/></svg><span class="lname">Операторы архива</span><span>Операторы архива могут переопределят…</span></div>
          <div class="lrow"><svg class="i16"><use href="#grp"/></svg><span class="lname">Операторы настройки…</span><span>Члены этой группы могут иметь некотор…</span></div>
          <div class="lrow"><svg class="i16"><use href="#grp"/></svg><span class="lname">Операторы помощи п…</span><span>Члены этой группы могут удаленно запра…</span></div>
          <div class="lrow"><svg class="i16"><use href="#grp"/></svg><span class="lname">Опытные пользователи</span><span>Категория опытных пользователей остав…</span></div>
          <div class="lrow"><svg class="i16"><use href="#grp"/></svg><span class="lname">Пользователи</span><span>Пользователи не имеют прав на изменени…</span></div>
          <div class="lrow"><svg class="i16"><use href="#grp"/></svg><span class="lname">Пользователи DCOM</span><span>Члены этой группы могут запускать, акт…</span></div>
          <div class="lrow"><svg class="i16"><use href="#grp"/></svg><span class="lname">Пользователи журнал…</span><span>Члены этой группы могут планировать ве…</span></div>
          <div class="lrow"><svg class="i16"><use href="#grp"/></svg><span class="lname">Пользователи систем…</span><span>Члены данной группы имеют как местный…</span></div>
          <div class="lrow"><svg class="i16"><use href="#grp"/></svg><span class="lname">Пользователи удален…</span><span>Члены этой группы имеют право на выпо…</span></div>
          <div class="lrow"><svg class="i16"><use href="#grp"/></svg><span class="lname">Пользователи удален…</span><span>Члены этой группы могут получать досту…</span></div>
          <div class="lrow"><svg class="i16"><use href="#grp"/></svg><span class="lname">Репликатор</span><span>Поддержка репликации файлов в домене</span></div>
          <div class="lrow"><svg class="i16"><use href="#grp"/></svg><span class="lname">Читатели журнала со…</span><span>Члены этой группы могут читать журнал…</span></div>
          <div class="lrow"><svg class="i16"><use href="#grp"/></svg><span class="lname">AMD FUEL</span><span>Members of this group can change AMD platf…</span></div>
          <div class="lrow"><svg class="i16"><use href="#grp"/></svg><span class="lname">Debugger Users</span><span>Debugger users can debug processes on this…</span></div>
          <div class="lrow"><svg class="i16"><use href="#grp"/></svg><span class="lname">HomeUsers</span><span>HomeUsers Security Group</span></div>
          <div class="lrow"><svg class="i16"><use href="#grp"/></svg><span class="lname">WinRMRemoteWMIUser…</span><span>Members of this group can access WMI reso…</span></div>
        </div>
      </div>
    </div>
    <footer class="status"><span class="scell m-s1"></span><span class="scell m-s2"></span><span class="scell m-s3"></span></footer>
  </section>

  <!-- Редактор реестра -->
  <section class="win w-reg">
    <header class="title"><svg class="i16"><use href="#regedit"/></svg><span class="ttext">Редактор реестра</span><span class="caps"><span class="cap"><svg><use href="#c-min"/></svg></span><span class="cap"><svg><use href="#c-max"/></svg></span><span class="cap capx"><svg><use href="#c-x"/></svg></span></span></header>
    <nav class="menu"><span>Файл</span><span>Правка</span><span>Вид</span><span>Избранное</span><span>Справка</span></nav>
    <div class="split reg-split">
      <div class="sunken reg-pane reg-tree-pane">
        <div class="reg-tree">
          <div class="rn r0"><i class="exp minus"></i><i class="dash"></i><svg class="i16"><use href="#comp"/></svg><span>Компьютер</span></div>
          <div class="rn r1"><i class="exp plus"></i><i class="dash"></i><svg class="i16"><use href="#folder"/></svg><span>HKEY_CLASSES_ROOT</span></div>
          <div class="rn r1"><i class="exp minus"></i><i class="dash"></i><svg class="i16"><use href="#folder"/></svg><span>HKEY_CURRENT_USER</span></div>
          <div class="rn r2"><i class="exp plus"></i><i class="dash"></i><svg class="i16"><use href="#folder"/></svg><span>AppEvents</span></div>
          <div class="rn r2"><i class="exp plus"></i><i class="dash"></i><svg class="i16"><use href="#folder"/></svg><span>AppXBackupContentTy</span></div>
          <div class="rn r2"><i class="exp plus"></i><i class="dash"></i><svg class="i16"><use href="#folder"/></svg><span>Console</span></div>
          <div class="rn r2"><i class="exp minus"></i><i class="dash"></i><svg class="i16"><use href="#folder"/></svg><span>Control Panel</span></div>
          <div class="rn r3"><i class="exp plus"></i><i class="dash"></i><svg class="i16"><use href="#folder"/></svg><span>Accessibility</span></div>
          <div class="rn r3"><i class="exp plus"></i><i class="dash"></i><svg class="i16"><use href="#folder"/></svg><span>Appearance</span></div>
          <div class="rn r3"><i class="exp plus"></i><i class="dash"></i><svg class="i16"><use href="#folder"/></svg><span>Bluetooth</span></div>
          <div class="rn r3 leaf"><i class="exp none"></i><i class="dash"></i><svg class="i16"><use href="#folder"/></svg><span>Colors</span></div>
          <div class="rn r3 leaf"><i class="exp none"></i><i class="dash"></i><svg class="i16"><use href="#folder"/></svg><span>Cursors</span></div>
          <div class="rn r3"><i class="exp plus"></i><i class="dash"></i><svg class="i16"><use href="#fopen"/></svg><span class="sel">Desktop</span></div>
          <div class="rn r3"><i class="exp plus"></i><i class="dash"></i><svg class="i16"><use href="#folder"/></svg><span>Infrared</span></div>
          <div class="rn r3"><i class="exp plus"></i><i class="dash"></i><svg class="i16"><use href="#folder"/></svg><span>Input Method</span></div>
          <div class="rn r3"><i class="exp plus"></i><i class="dash"></i><svg class="i16"><use href="#folder"/></svg><span>International</span></div>
          <div class="rn r3 leaf"><i class="exp none"></i><i class="dash"></i><svg class="i16"><use href="#folder"/></svg><span>Keyboard</span></div>
          <div class="rn r3 leaf"><i class="exp none"></i><i class="dash"></i><svg class="i16"><use href="#folder"/></svg><span>MMCPL</span></div>
          <div class="rn r3 leaf"><i class="exp none"></i><i class="dash"></i><svg class="i16"><use href="#folder"/></svg><span>Mouse</span></div>
          <div class="rn r3"><i class="exp plus"></i><i class="dash"></i><svg class="i16"><use href="#folder"/></svg><span>Personalization</span></div>
          <div class="rn r3"><i class="exp plus"></i><i class="dash"></i><svg class="i16"><use href="#folder"/></svg><span>PowerCfg</span></div>
        </div>
        <div class="vscroll vs-tree"><span class="sbtn up"></span><span class="thumb"></span><span class="track"></span><span class="sbtn down"></span></div>
        <div class="hscroll hs-tree"><span class="sbtn left"></span><span class="thumb"></span><span class="track"></span><span class="sbtn right"></span></div>
        <span class="corner"></span>
      </div>
      <div class="sunken reg-pane reg-list-pane">
        <div class="reg-list">
          <div class="lhead"><span class="hcell h-rname">Имя</span><span class="hcell h-rtype">Тип</span><span class="hcell h-rval">З</span></div>
          <div class="rrow"><svg class="i16" viewBox="0 0 16 16"><use href="#val-page" width="16" height="16"/><text class="lg lg-ab" x="7.5" y="9">ab</text></svg><span>(По умолчанию)</span><span>REG_SZ</span><span>(:</span></div>
          <div class="rrow"><svg class="i16"><use href="#val-bin"/></svg><span>ActiveWndTrackTimeout</span><span>REG_DWORD</span><span>0</span></div>
          <div class="rrow"><svg class="i16"><use href="#val-bin"/></svg><span>ActiveWndTrkTimeout</span><span>REG_DWORD</span><span>0</span></div>
          <div class="rrow"><svg class="i16"><use href="#val-bin"/></svg><span>AutoColorization</span><span>REG_DWORD</span><span>0</span></div>
          <div class="rrow"><svg class="i16" viewBox="0 0 16 16"><use href="#val-page" width="16" height="16"/><text class="lg lg-ab" x="7.5" y="9">ab</text></svg><span>BlockSendInputResets</span><span>REG_SZ</span><span>0</span></div>
          <div class="rrow"><svg class="i16"><use href="#val-bin"/></svg><span>CaretWidth</span><span>REG_DWORD</span><span>0</span></div>
          <div class="rrow"><svg class="i16"><use href="#val-bin"/></svg><span>ClickLockTime</span><span>REG_DWORD</span><span>0</span></div>
          <div class="rrow"><svg class="i16" viewBox="0 0 16 16"><use href="#val-page" width="16" height="16"/><text class="lg lg-ab" x="7.5" y="9">ab</text></svg><span>CoolSwitchColumns</span><span>REG_SZ</span><span>7</span></div>
          <div class="rrow"><svg class="i16" viewBox="0 0 16 16"><use href="#val-page" width="16" height="16"/><text class="lg lg-ab" x="7.5" y="9">ab</text></svg><span>CoolSwitchRows</span><span>REG_SZ</span><span>3</span></div>
          <div class="rrow"><svg class="i16" viewBox="0 0 16 16"><use href="#val-page" width="16" height="16"/><text class="lg lg-ab" x="7.5" y="9">ab</text></svg><span>CursorBlinkRate</span><span>REG_SZ</span><span>5</span></div>
          <div class="rrow"><svg class="i16" viewBox="0 0 16 16"><use href="#val-page" width="16" height="16"/><text class="lg lg-ab" x="7.5" y="9">ab</text></svg><span>DesktopDPIOverride</span><span>REG_SZ</span><span>0</span></div>
          <div class="rrow"><svg class="i16" viewBox="0 0 16 16"><use href="#val-page" width="16" height="16"/><text class="lg lg-ab" x="7.5" y="9">ab</text></svg><span>DockMoving</span><span>REG_SZ</span><span>1</span></div>
          <div class="rrow"><svg class="i16" viewBox="0 0 16 16"><use href="#val-page" width="16" height="16"/><text class="lg lg-ab" x="7.5" y="9">ab</text></svg><span>DragFromMaximize</span><span>REG_SZ</span><span>1</span></div>
          <div class="rrow"><svg class="i16" viewBox="0 0 16 16"><use href="#val-page" width="16" height="16"/><text class="lg lg-ab" x="7.5" y="9">ab</text></svg><span>DragFullWindows</span><span>REG_SZ</span><span>1</span></div>
          <div class="rrow"><svg class="i16" viewBox="0 0 16 16"><use href="#val-page" width="16" height="16"/><text class="lg lg-ab" x="7.5" y="9">ab</text></svg><span>DragHeight</span><span>REG_SZ</span><span>4</span></div>
          <div class="rrow"><svg class="i16" viewBox="0 0 16 16"><use href="#val-page" width="16" height="16"/><text class="lg lg-ab" x="7.5" y="9">ab</text></svg><span>DragWidth</span><span>REG_SZ</span><span>4</span></div>
          <div class="rrow"><svg class="i16"><use href="#val-bin"/></svg><span>FocusBorderHeight</span><span>REG_DWORD</span><span>0</span></div>
          <div class="rrow"><svg class="i16"><use href="#val-bin"/></svg><span>FocusBorderWidth</span><span>REG_DWORD</span><span>0</span></div>
          <div class="rrow"><svg class="i16" viewBox="0 0 16 16"><use href="#val-page" width="16" height="16"/><text class="lg lg-ab" x="7.5" y="9">ab</text></svg><span>FontSmoothing</span><span>REG_SZ</span><span>2</span></div>
        </div>
        <div class="vscroll vs-list"><span class="sbtn up"></span><span class="thumb"></span><span class="track"></span><span class="sbtn down"></span></div>
        <div class="hscroll hs-list"><span class="sbtn left"></span><span class="thumb"></span><span class="track"></span><span class="sbtn right"></span></div>
        <span class="corner"></span>
      </div>
    </div>
    <footer class="status"><span class="scell s-grow">Компьютер\HKEY_CURRENT_USER\Control Panel\Desktop<i class="grip"></i></span></footer>
  </section>

  <!-- Сетевые подключения -->
  <section class="win w-net">
    <header class="title"><svg class="i16"><use href="#netc"/></svg><span class="ttext">Сетевые подключения</span><span class="caps"><span class="cap"><svg><use href="#c-min"/></svg></span><span class="cap"><svg><use href="#c-max"/></svg></span><span class="cap capx"><svg><use href="#c-x"/></svg></span></span></header>
    <nav class="menu"><span>Файл</span><span>Правка</span><span>Вид</span><span>Сервис</span><span>Допол</span><b class="more">»</b></nav>
    <div class="sunken net-view">
      <div class="lhead net-head">
        <span class="hcell n-h">И…<i class="sortup"></i></span><span class="hcell n-dd"><i class="ddarrow"></i></span>
        <span class="hcell n-h">Состо…</span><span class="hcell n-dd"><i class="ddarrow"></i></span>
        <span class="hcell n-h">Имя ус…</span><span class="hcell n-dd"><i class="ddarrow"></i></span>
        <span class="hcell n-r">Под</span>
      </div>
      <div class="nbody">
        <div class="nrow"><svg class="i16"><use href="#eth"/></svg><span>Ethernet</span><span>Подклю…</span><span>Realtek P…</span></div>
        <div class="nrow"><svg class="i16"><use href="#wifi"/></svg><span>Беспр…</span><span>Подклю…</span><span>Qualcom…</span></div>
      </div>
      <div class="hscroll net-hs"><span class="sbtn left"></span><span class="thumb"></span><span class="track"></span><span class="sbtn right"></span></div>
    </div>
    <footer class="status"><span class="scell s-empty n-empty"></span><span class="scell s-grow"><svg class="i16"><use href="#comp"/></svg>Компьютер<i class="grip"></i></span></footer>
  </section>

  <!-- Параметры папок -->
  <section class="win w-opts">
    <header class="title active"><span class="ttext">Параметры папок</span><span class="caps"><span class="cap capx"><svg><use href="#c-x"/></svg></span></span></header>
    <div class="tabs"><span class="tab on t-w48">Общие</span><span class="tab t-w40">Вид</span><span class="tab t-w43">Поиск</span></div>
    <div class="tabpanel opts-panel">
      <fieldset class="grp g1">
        <legend>Обзор папок</legend>
        <div class="grow"><svg class="gicon ic-view"><use href="#fo-view"/></svg>
          <div class="opts r21">
            <label class="opt"><i class="radio"></i>Открывать папки в одном и том же окне</label>
            <label class="opt"><i class="radio on"></i>Открывать каждую папку в отдельном окне</label>
          </div></div>
      </fieldset>
      <fieldset class="grp g2">
        <legend>Щелчки мышью</legend>
        <div class="grow"><svg class="gicon ic-click"><use href="#fo-click"/></svg>
          <div class="opts r18">
            <label class="opt"><i class="radio"></i>Открывать одним щелчком, выделять указателем</label>
            <label class="opt sub dis"><i class="radio on"></i>Подчеркивать подписи значков</label>
            <label class="opt sub dis"><i class="radio"></i>Подчеркивать подписи значков при наведении</label>
            <label class="opt"><i class="radio on"></i>Открывать двойным, а выделять одним щелчком</label>
          </div></div>
      </fieldset>
      <fieldset class="grp g3">
        <legend>Область навигации</legend>
        <div class="grow"><svg class="gicon ic-tree"><use href="#fo-tree"/></svg>
          <div class="opts r21">
            <label class="opt"><i class="check"></i>Отображать папку "Избранное"</label>
            <label class="opt"><i class="check on"></i>Отображать все папки</label>
            <label class="opt"><i class="check on"></i>Автоматически разворачивать до текущей папки</label>
            <label class="opt"><i class="check on"></i>Показать библиотеки</label>
          </div></div>
      </fieldset>
      <div class="restore-row"><span class="btn b-restore">Восстановить значения по умолчанию</span></div>
      <a class="link">Как мне изменить параметры папок?</a>
    </div>
    <div class="dlgbtns"><span class="btn b75 def">OK</span><span class="btn b75">Отмена</span><span class="btn b75 dis">Применить</span></div>
  </section>

  <!-- Состояние -->
  <section class="win w-wifi">
    <header class="title"><svg class="i16"><use href="#wifi"/></svg><span class="ttext">Состояние - Беспроводная сеть</span><span class="caps"><span class="cap capx"><svg><use href="#c-x"/></svg></span></span></header>
    <div class="tabs wifi-tabs"><span class="tab on t-w50">Общие</span></div>
    <div class="tabpanel wifi-panel">
      <div class="shead"><span>Подключение</span><i></i></div>
      <dl class="kv">
        <div><dt>IPv4-подключение:</dt><dd>Не подключено</dd></div>
        <div><dt>IPv6-подключение:</dt><dd>Не подключено</dd></div>
        <div><dt>Состояние среды:</dt><dd>Подключено</dd></div>
        <div><dt>SSID:</dt><dd>Venera-LAN</dd></div>
        <div><dt>Длительность:</dt><dd>1 день 00:15:08</dd></div>
        <div><dt>Скорость:</dt><dd>72.2 Мбит/с</dd></div>
      </dl>
      <div class="signal"><span>Качество сигнала:</span><svg class="bars"><use href="#wifi"/></svg></div>
      <div class="btnrow"><span class="btn b-det">Сведения...</span><span class="btn b-wprop">Свойства беспроводной сети</span></div>
      <div class="shead shead2"><span>Активность</span><i></i></div>
      <div class="activity"><span class="a-sent">Отправлено</span><i class="adash ad1"></i><svg class="a-comp"><use href="#netcomp"/></svg><i class="adash ad2"></i><span class="a-recv">Принято</span></div>
      <div class="bytes"><span class="b-lab">Байт:</span><span class="b-s">42</span><i class="b-sep"></i><span class="b-r">2 151</span></div>
      <div class="btnrow btnrow2"><span class="btn b-sh1"><svg class="i16"><use href="#shield"/></svg>Свойства</span><span class="btn b-sh2"><svg class="i16"><use href="#shield"/></svg>Отключить</span><span class="btn b-diag">Диагностика</span></div>
    </div>
    <div class="dlgbtns"><span class="btn b75">Закрыть</span></div>
  </section>
</main>

<footer class="taskbar">
  <span class="startbtn"><svg class="i16"><use href="#start"/></svg>Пуск</span>
  <i class="qsep qs1"></i>
  <div class="quick"><svg class="i16"><use href="#cmd"/></svg><svg class="i16"><use href="#oe16"/></svg><svg class="i16"><use href="#ff"/></svg><svg class="i16"><use href="#showd"/></svg></div>
  <i class="qsep qs2"></i>
  <div class="tasks">
    <span class="task"><svg class="i16"><use href="#comp"/></svg><span>Этот компьютер</span></span>
    <span class="task"><svg class="i16"><use href="#mgmt"/></svg><span>Управление компьюте…</span></span>
    <span class="task on"><svg class="i16"><use href="#fo-task"/></svg><span>Параметры папок</span></span>
    <span class="task"><svg class="i16"><use href="#regedit"/></svg><span>Редактор реестра</span></span>
    <span class="task"><svg class="i16"><use href="#netc"/></svg><span>Сетевые подключения</span></span>
    <span class="task"><svg class="i16"><use href="#drive"/></svg><span>Локальный диск (C:)</span></span>
    <span class="task"><svg class="i16"><use href="#wifi"/></svg><span>Состояние - Беспровод…</span></span>
  </div>
  <div class="tray"><svg class="i16"><use href="#tr-net"/></svg><svg class="i16"><use href="#tr-pow"/></svg><svg class="i16"><use href="#tr-vol"/></svg><span class="lang">ENG</span><span class="clock">16:07</span></div>
</footer>
</body>
</html>
```
FILE: styles.css
```css
:root{--face:#d0d4d7;--dk:#3e4244;--md:#85898c;--fg:#0c0d0e;--gray:#7f8487;}
*{box-sizing:border-box;}
html,body{margin:0;padding:0;height:100%;}
body{width:1920px;height:1200px;overflow:hidden;display:flex;flex-direction:column;background:#3f525a;color:var(--fg);font:11px/13px "DejaVu Sans","Liberation Sans",sans-serif;font-stretch:condensed;letter-spacing:-.12px;}
.sprite{display:block;width:0;height:0;overflow:hidden;}
i{font-style:normal;}
svg{flex:none;display:block;}
.i16{width:16px;height:16px;}
.i32{width:32px;height:32px;}
.ifold{width:28px;height:27px;}
.lg{text-anchor:middle;letter-spacing:0;font-weight:700;}
.lg-hon{font:700 13px "Liberation Serif",serif;fill:#f4d660;}
.lg-reg{font:700 25px "Liberation Serif",serif;fill:#e8dcb8;}
.lg-sk{font:700 24px "Liberation Sans",sans-serif;fill:#fff;}
.lg-txc{font:italic 700 15px "Liberation Serif",serif;fill:#76741a;}
.lg-help{font:700 13px "Liberation Sans",sans-serif;fill:#fff;}
.lg-ab{font:700 10px "Liberation Sans",sans-serif;fill:#d8401a;}

.desktop{position:relative;flex:1;min-height:0;}
.dicons{display:grid;grid-template-columns:repeat(15,76px);grid-auto-rows:83px;margin-left:-1px;padding-top:8px;}
.dicon{display:flex;flex-direction:column;align-items:center;color:#e6eaec;text-align:center;}
.dicon span{margin-top:3px;width:70px;}
.dicon .lbl-wide{width:76px;white-space:nowrap;}
.c1{grid-column:1;}.c8{grid-column:9;}.c9{grid-column:10;}.c10{grid-column:11;}.c14{grid-column:14;}.c15{grid-column:15;}

/* windows */
.win{position:absolute;display:flex;flex-direction:column;padding:4px;background:var(--face);box-shadow:inset -1px -1px 0 #4a4e50,inset 1px 1px 0 #d8dbdd,inset -2px -2px 0 #8a8e91,inset 2px 2px 0 #fff;}
.w-comp{left:152px;top:204px;width:238px;height:242px;padding-bottom:2px;}
.w-disk{left:481px;top:140px;width:459px;height:400px;padding-bottom:2px;}
.w-opts{left:675px;top:412px;width:385px;height:467px;}
.w-mgmt{left:1092px;top:120px;width:610px;height:488px;padding-bottom:3px;}
.w-reg{left:89px;top:674px;width:520px;height:415px;}
.w-net{left:1101px;top:735px;width:243px;height:242px;padding-bottom:3px;}
.w-wifi{left:1423px;top:684px;width:366px;height:442px;}

.title{display:flex;align-items:center;gap:2px;flex:none;height:18px;padding-left:2px;background:linear-gradient(90deg,#5f7a95,#d4e2f0);color:#d4d8da;font-weight:700;font-stretch:normal;letter-spacing:0;white-space:nowrap;overflow:hidden;}
.title.active{background:linear-gradient(90deg,#4f6e8f,#d4e2f0);color:#f4f6f8;}
.ttext{flex:1;min-width:0;overflow:hidden;}
.caps{display:flex;flex:none;margin-right:2px;}
.cap{width:16px;height:14px;background:var(--face);box-shadow:inset -1px -1px 0 var(--dk),inset 1px 1px 0 #fff,inset -2px -2px 0 var(--md);}
.cap svg{width:16px;height:14px;}
.capx{margin-left:2px;}

.menu{display:flex;align-items:center;gap:16px;flex:none;height:22px;padding-left:7px;color:var(--gray);white-space:nowrap;overflow:hidden;}
.menu-dark{color:var(--fg);}
.band{border:1px solid;border-color:#fff #8a8e91 #8a8e91 #fff;}
.w-mgmt .menu{height:25px;margin-top:1px;padding-left:8px;}
.more{flex:none;font-weight:700;margin:-5px 3px 0 -12px;color:#222;font-size:12px;}
.w-reg .menu{height:21px;padding-left:6px;gap:11px;}

.sunken{background:#fff;border:2px solid;border-color:#4a4e50 #f2f3f4 #f2f3f4 #4a4e50;}

.iconview{flex:1;min-height:0;overflow:hidden;display:grid;grid-auto-rows:80px;}
.comp-view{margin:2px 0;grid-template-columns:repeat(3,74px);padding:6px 0 0 2px;}
.folder-view{margin-top:2px;grid-template-columns:repeat(6,74px);padding:9px 0 0 2px;}
.fitem{display:flex;flex-direction:column;align-items:center;text-align:center;}
.fitem span{margin-top:4px;width:74px;}
.folder-view .fitem span{margin-top:5px;padding-left:1px;}
.ghost svg{opacity:.5;}

.status{display:flex;gap:3px;flex:none;height:20px;margin-top:1px;}
.scell{display:flex;align-items:center;gap:2px;padding-left:2px;height:100%;border:1px solid;border-color:#8a8e91 #fff #fff #8a8e91;white-space:nowrap;}
.s-empty{width:62px;}
.n-empty{width:66px;}
.s-grow{flex:1;min-width:0;}
.grip{margin-left:auto;width:12px;height:12px;align-self:flex-end;background:repeating-linear-gradient(135deg,transparent 0 2px,#8a8e91 2px 3px,#fff 3px 4px);clip-path:polygon(100% 0,100% 100%,0 100%);}
.m-s1{width:382px;}.m-s2{width:131px;}.m-s3{flex:1;}

/* scrollbars */
.hscroll{display:flex;height:16px;flex:none;}
.vscroll{display:flex;flex-direction:column;width:16px;flex:none;}
.sbtn{position:relative;flex:none;width:16px;height:16px;background:var(--face);box-shadow:inset -1px -1px 0 var(--dk),inset 1px 1px 0 #fff,inset -2px -2px 0 var(--md);}
.sbtn::before{content:"";position:absolute;left:50%;top:50%;width:0;height:0;border:4px solid transparent;}
.sbtn.left::before{border-right-color:#000;border-left-width:0;transform:translate(-3px,-4px);}
.sbtn.right::before{border-left-color:#000;border-right-width:0;transform:translate(-1px,-4px);}
.sbtn.up::before{border-bottom-color:#000;border-top-width:0;transform:translate(-4px,-3px);}
.sbtn.down::before{border-top-color:#000;border-bottom-width:0;transform:translate(-4px,-1px);}
.thumb{flex:none;background:var(--face);box-shadow:inset -1px -1px 0 var(--dk),inset 1px 1px 0 #fff,inset -2px -2px 0 var(--md);}
.track{flex:1;min-width:0;min-height:0;background-image:conic-gradient(#fff 25%,var(--face) 0 50%,#fff 0 75%,var(--face) 0);background-size:2px 2px;}
.hscroll .thumb{width:140px;}
.corner{background:var(--face);}

/* tree */
.exp{display:block;position:relative;flex:none;width:9px;height:9px;border:1px solid #808488;background:#fff;}
.exp.none{visibility:hidden;}
.exp::before{content:"";position:absolute;left:1px;top:3px;width:5px;height:1px;background:#000;}
.exp.plus::after{content:"";position:absolute;left:3px;top:1px;width:1px;height:5px;background:#000;}
.sel{background:#d0d4d7;padding:1px 2px;margin-left:-2px;}

.split{display:flex;flex:1;min-height:0;}
.mgmt-split{gap:3px;margin-top:3px;margin-left:2px;}
.treepane{display:flex;flex-direction:column;}
.mgmt-tree{width:187px;}
.tree{flex:1;min-height:0;overflow:hidden;white-space:nowrap;}
.tn{display:flex;align-items:center;height:16px;}
.tn .i16{margin-right:3px;}
.tn .exp{margin-right:7px;}
.root{padding-left:1px;}
.root .i16{margin-right:5px;}
.l1{padding-left:5px;}
.l2{padding-left:24px;}
.l3{padding-left:43px;}
.mgmt-hs .thumb{width:116px;}
.mgmt-list{flex:1;min-width:0;display:flex;flex-direction:column;}
.lhead{display:flex;flex:none;height:17px;background:var(--face);overflow:hidden;white-space:nowrap;}
.hcell{display:flex;align-items:center;padding:1px 0 0 6px;border-right:2px solid #85898c;border-bottom:1px solid #5a5e60;flex:none;}
.h-name{width:150px;padding-left:7px;}
.h-desc{width:240px;}
.h-rest{flex:1;border-right:0;}
.lbody{flex:1;min-height:0;overflow:hidden;padding:1px 0 0 5px;}
.lrow{display:flex;align-items:center;height:17px;white-space:nowrap;}
.lname{width:134px;flex:none;margin-left:1px;overflow:hidden;}

.toolbar{display:flex;align-items:center;flex:none;height:24px;padding-left:4px;gap:6px;}
.tsep{display:block;width:2px;height:16px;background:#8a8e91;border-right:1px solid #fff;margin:0 1px;}
.tpressed{display:flex;align-items:center;justify-content:center;width:23px;height:22px;margin:0 -2px;background:#e2e4e6;border:1px solid;border-color:#777 #fff #fff #777;}

/* regedit */
.reg-split{gap:4px;}
.reg-pane{display:grid;grid-template-columns:1fr 16px;grid-template-rows:1fr 15px;min-height:0;min-width:0;}
.reg-tree-pane{width:208px;}
.reg-list-pane{width:300px;}
.reg-tree{overflow:hidden;white-space:nowrap;min-width:0;margin-top:-1px;background-image:repeating-linear-gradient(#8a8e91 0 1px,transparent 1px 2px),repeating-linear-gradient(#8a8e91 0 1px,transparent 1px 2px),repeating-linear-gradient(#8a8e91 0 1px,transparent 1px 2px);background-size:1px 100%;background-repeat:no-repeat;background-position:29px 16px,48px 60px,67px 112px;}
.rn{display:flex;align-items:center;height:16px;}
.rn .i16{margin-right:3px;}
.rn .exp{z-index:1;}
.dash{display:block;flex:none;width:9px;border-top:1px dotted #8a8e91;}
.r0{padding-left:6px;}
.r0 .i16{margin:0 4px 0 0;}
.r0 .dash{width:8px;}
.r1{padding-left:25px;}
.r2{padding-left:44px;}
.r3{padding-left:63px;}
.leaf .exp{width:0;border:0;}
.leaf .dash{width:18px;margin-left:5px;}
.vs-tree .thumb{height:163px;}
.vs-list .thumb{height:97px;}
.hs-tree .thumb{width:140px;}
.hs-list .thumb{width:90px;}
.reg-list{overflow:hidden;min-width:0;white-space:nowrap;}
.h-rname{width:179px;}
.h-rtype{width:92px;}
.h-rval{width:9px;border-right:0;}
.rrow{display:grid;grid-template-columns:16px 163px 91px 8px;align-items:center;height:17px;padding-left:4px;column-gap:1px;}
.w-reg .status{margin-top:3px;}

/* net */
.net-view{flex:1;min-height:0;display:flex;flex-direction:column;margin:1px 1px 0;}
.net-head{height:17px;}
.n-h{width:56px;padding-left:5px;border-right:1px solid #85898c;border-left:1px solid #fff;}
.n-dd{width:13px;padding:0;justify-content:center;border-right:1px solid #85898c;border-left:1px solid #fff;}
.n-r{flex:1;padding-left:4px;border-right:0;border-left:1px solid #fff;}
.sortup{width:0;height:0;border:4px solid transparent;border-bottom-color:#9ea2a5;border-top-width:0;margin-left:14px;}
.ddarrow{width:0;height:0;border:3px solid transparent;border-top-color:#000;border-bottom-width:0;}
.nbody{flex:1;min-height:0;padding-left:7px;white-space:nowrap;}
.nrow{display:grid;grid-template-columns:16px 51px 70px auto;align-items:center;height:18px;}
.net-hs .thumb{width:82px;}

/* dialogs */
.tabs{display:flex;align-items:flex-end;flex:none;height:27px;margin-left:6px;position:relative;z-index:1;}
.tab{display:flex;align-items:center;height:18px;padding-left:4px;border:1px solid;border-color:#fff #4a4e50 transparent #fff;border-radius:2px 2px 0 0;background:var(--face);}
.tab.on{height:21px;padding-left:5px;margin-bottom:-1px;border-bottom:0;}
.t-w48{width:49px;}.t-w40{width:42px;}.t-w43{width:44px;}.t-w50{width:50px;}
.tabpanel{display:flex;flex-direction:column;flex:none;margin-left:6px;margin-right:4px;border:1px solid;border-color:#fff #4a4e50 #4a4e50 #fff;box-shadow:1px 1px 0 #888;}
.opts-panel{height:380px;padding:9px 14px 0;}
.grp{margin:0;padding:0;min-width:0;border:1px solid #85898c;box-shadow:1px 1px 0 #fff,inset 1px 1px 0 #fff;}
.grp legend{padding:4px 2px 0;margin-left:5px;line-height:14px;}
.g2{margin-top:9px;}
.g3{margin-top:8px;}
.grow{display:flex;margin-top:-2px;}
.ic-view{width:30px;height:30px;margin:7px 10px 0 11px;}
.ic-click{width:30px;height:36px;margin:2px 10px 0 11px;}
.ic-tree{width:26px;height:40px;margin:5px 12px 0 13px;}
.opts{flex:1;}
.r21 .opt{height:21px;}
.r18 .opt{height:18px;}
.g2 .opts{padding-top:4px;padding-bottom:8px;}
.g3 .opts{padding-bottom:5px;}
.g1 .opts{padding-bottom:5px;}
.opt{display:flex;align-items:center;white-space:nowrap;}
.opt.sub{padding-left:19px;}
.opt.dis{color:#8d9195;text-shadow:1px 1px 0 #fff;}
.radio{display:block;position:relative;flex:none;width:12px;height:12px;margin-right:3px;border-radius:50%;background:#fff;border:1px solid;border-color:#777 #fff #fff #777;box-shadow:-1px -1px 0 #cfd3d6;}
.radio.on::before{content:"";position:absolute;left:3px;top:3px;width:4px;height:4px;border-radius:50%;background:#000;}
.dis .radio{background:var(--face);}
.dis .radio.on::before{background:#85898c;}
.check{display:block;position:relative;flex:none;width:13px;height:13px;margin-right:4px;margin-left:-1px;background:#fff;border:1px solid;border-color:#666 #fff #fff #666;box-shadow:inset 1px 1px 0 #aaa;}
.check.on::before{content:"";position:absolute;left:2px;top:1px;width:6px;height:8px;border:solid #000;border-width:0 2px 2px 0;transform:rotate(40deg) scale(.8);}
.restore-row{display:flex;justify-content:flex-end;margin-top:7px;}
.btn{display:flex;align-items:center;justify-content:center;height:22px;background:var(--face);white-space:nowrap;box-shadow:inset -1px -1px 0 var(--dk),inset 1px 1px 0 #fff,inset -2px -2px 0 var(--md);}
.b-restore{width:208px;}
.link{margin-top:13px;color:#24506e;text-decoration:underline;line-height:14px;}
.dlgbtns{display:flex;justify-content:flex-end;gap:6px;margin-top:6px;margin-right:4px;}
.b75{width:75px;}
.btn.def{outline:1px solid #000;outline-offset:-1px;}
.btn.dis{color:#85898c;text-shadow:1px 1px 0 #fff;}

.wifi-tabs{height:26px;}
.wifi-panel{height:354px;padding:17px 18px 0 13px;}
.shead{display:flex;align-items:center;gap:6px;}
.shead i{display:block;height:2px;flex:1;background:#85898c;border-bottom:1px solid #fff;margin-right:-3px;}
.kv{margin:4px 0 0 15px;}
.kv div{display:flex;justify-content:space-between;height:18px;align-items:center;margin-right:13px;}
.kv dd{margin:0;}
.signal{display:flex;justify-content:space-between;align-items:center;margin:2px 9px 0 15px;height:26px;}
.bars{width:31px;height:26px;}
.btnrow{display:flex;gap:4px;margin:4px 0 0 15px;}
.b-det{width:75px;}
.b-wprop{width:173px;}
.shead2{margin-top:10px;}
.shead2 i{margin-right:-2px;}
.activity{display:flex;align-items:flex-start;margin-top:5px;padding-left:70px;height:44px;}
.a-sent{flex:none;width:62px;margin-top:11px;text-align:right;white-space:nowrap;}
.adash{display:block;flex:none;width:20px;height:2px;background:#85898c;margin-top:17px;}
.ad1{margin-left:6px;}
.ad2{margin-left:5px;}
.a-comp{width:46px;height:44px;margin-left:14px;}
.a-recv{flex:none;margin:11px 0 0 16px;}
.bytes{display:flex;align-items:center;height:14px;margin:-1px 0 0 15px;}
.b-lab{width:100px;}
.b-s{width:47px;text-align:right;}
.b-sep{display:block;width:2px;height:12px;background:#85898c;margin:3px 0 0 29px;}
.b-r{width:112px;text-align:right;}
.btnrow2{margin-top:32px;}
.btn .i16{margin-right:2px;}
.b-sh1{width:83px;}.b-sh2{width:83px;}.b-diag{width:82px;}

/* taskbar */
.taskbar{display:flex;align-items:center;flex:none;height:28px;padding:2px 2px 0;background:var(--face);border-top:1px solid #fff;}
.startbtn{display:flex;align-items:center;justify-content:center;gap:2px;width:54px;height:22px;font-weight:700;box-shadow:inset -1px -1px 0 var(--dk),inset 1px 1px 0 #fff,inset -2px -2px 0 var(--md);}
.qsep{display:block;flex:none;width:2px;height:18px;background:#85898c;border-right:1px solid #fff;}
.qs1{margin:0 8px 0 4px;}
.qs2{margin:0 8px 0 12px;}
.quick{display:flex;gap:7px;}
.tasks{display:flex;gap:2px;flex:1;}
.task{display:flex;align-items:center;gap:3px;width:160px;height:22px;padding-left:4px;white-space:nowrap;box-shadow:inset -1px -1px 0 var(--dk),inset 1px 1px 0 #fff,inset -2px -2px 0 var(--md);}
.task.on{background:#fff;font-weight:700;box-shadow:inset 1px 1px 0 #3e4244,inset -1px -1px 0 #fff,inset 2px 2px 0 #85898c;}
.tray{display:flex;align-items:center;width:137px;height:22px;padding-left:4px;border:1px solid;border-color:#85898c #fff #fff #85898c;}
.lang{margin-left:14px;}
.clock{margin-left:15px;}
```
